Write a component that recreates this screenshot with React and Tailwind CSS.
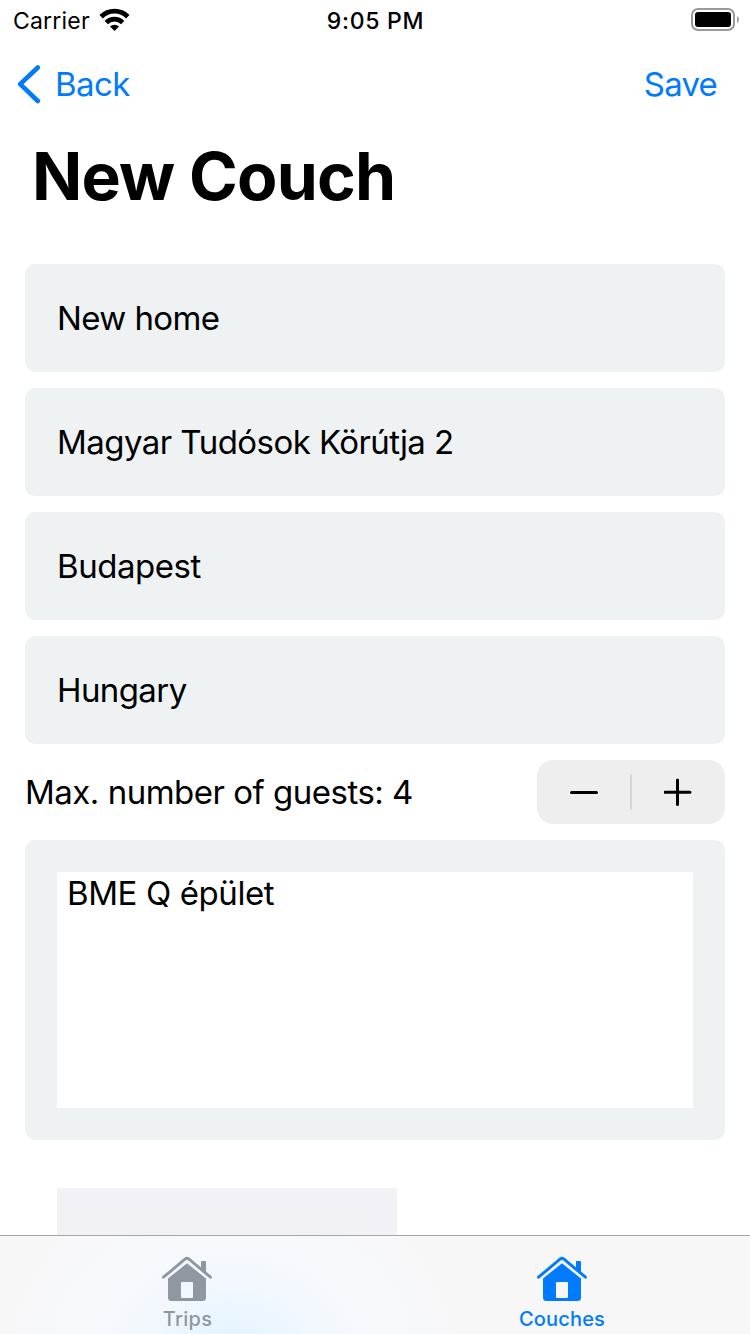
const fields = [
  { value: 'New home', tracking: 'tracking-[-0.6px]' },
  { value: 'Magyar Tudósok Körútja 2', tracking: 'tracking-[-0.55px]' },
  { value: 'Budapest', tracking: 'tracking-[-0.45px]' },
  { value: 'Hungary', tracking: 'tracking-[-0.6px]' },
];

function WifiIcon() {
  return (
    <svg className="mb-[2px] ml-[9px] h-[23px] w-[31px]" viewBox="0 0 31 23" fill="none">
      <path d="M2.2 8.8A18.6 18.6 0 0 1 28.8 8.8" stroke="#000" strokeWidth="4.8" />
      <path d="M7.3 14.6A11.4 11.4 0 0 1 23.7 14.6" stroke="#000" strokeWidth="4.6" />
      <path d="M11 18.6A6.6 6.6 0 0 1 20 18.6L15.5 23Z" fill="#000" />
    </svg>
  );
}

function BatteryIcon() {
  return (
    <svg className="h-[24px] w-[50px]" viewBox="0 0 50 24" fill="none">
      <rect x="2" y="1" width="42" height="21" rx="6" stroke="#999" strokeWidth="2" />
      <rect x="5" y="4" width="36" height="15" rx="3" fill="#000" />
      <path d="M47 8Q49 9 49 11.5T47 15Z" fill="#999" />
    </svg>
  );
}

function HouseIcon() {
  return (
    <svg className="h-[46px] w-[50px]" viewBox="0 0 50 46" fill="none">
      <path
        d="M1.5 21.2L23.3 3Q25 1.7 26.7 3L48.5 21.2"
        stroke="currentColor"
        strokeWidth="2.9"
        strokeLinecap="round"
      />
      <path d="M39 13V6Q39 5 40 5H43Q44 5 44 6V17.3Z" fill="currentColor" />
      <path
        fillRule="evenodd"
        d="M25 7.2L44 22.6V41.5Q44 45 40.5 45H9.5Q6 45 6 41.5V22.6ZM20 26Q19 26 19 27V41Q19 42 20 42H30Q31 42 31 41V27Q31 26 30 26Z"
        fill="currentColor"
      />
    </svg>
  );
}

function Field({ value, tracking }) {
  return (
    <div className="flex h-[108px] shrink-0 items-center rounded-[10px] bg-[#eef2f3] pl-8">
      <span className={tracking}>{value}</span>
    </div>
  );
}

export default function App() {
  return (
    <div className="flex h-[1334px] w-[750px] flex-col overflow-hidden bg-white font-['Inter',sans-serif] text-[33px] leading-[40px] text-black">
      <header className="shrink-0">
        <div className="grid h-10 grid-cols-3 items-center pr-3 pl-[13px] text-[23px] leading-[36px]">
          <div className="flex items-center">
            <span className="pt-[2px] tracking-[0.2px]">Carrier</span>
            <WifiIcon />
          </div>
          <span className="pt-[2px] text-center font-medium tracking-[0.7px]">9:05 PM</span>
          <div className="-mr-[2px] flex justify-end">
            <BatteryIcon />
          </div>
        </div>
        <nav className="flex h-[88px] items-center justify-between pr-[33px] pl-4 text-[#007aff]">
          <button className="flex items-center">
            <svg className="h-[40px] w-[26px]" viewBox="0 0 26 40" fill="none">
              <path d="M21.8 3.5L4.2 20.2L21.8 37" stroke="currentColor" strokeWidth="4.6" strokeLinecap="round" strokeLinejoin="round" />
            </svg>
            <span className="ml-[13px] tracking-[-0.6px]">Back</span>
          </button>
          <button className="tracking-[-0.8px]">Save</button>
        </nav>
        <h1 className="h-[104px] pt-2 pl-8 text-[66px] leading-[80px] font-bold tracking-[-0.85px]">New Couch</h1>
      </header>

      <main className="flex min-h-0 flex-1 flex-col gap-4 overflow-hidden px-[25px] pt-8">
        {fields.map((f) => (
          <Field key={f.value} {...f} />
        ))}
        <div className="flex h-16 shrink-0 items-center justify-between">
          <span className="tracking-[-0.5px]">Max. number of guests: 4</span>
          <div className="flex h-16 w-[188px] items-center rounded-[16px] bg-[#eeeeee]">
            <button className="flex w-[93px] justify-center">
              <svg className="h-7 w-7" viewBox="0 0 28 28">
                <path d="M1.5 14.5H26.5" stroke="#000" strokeWidth="3" strokeLinecap="round" />
              </svg>
            </button>
            <div className="h-9 w-[2px] rounded-full bg-[#d5d5d6]" />
            <button className="flex w-[93px] justify-center pr-px">
              <svg className="h-7 w-7" viewBox="0 0 28 28">
                <path d="M1 14.3H26M13.5 2V26.5" stroke="#000" strokeWidth="3" strokeLinecap="round" />
              </svg>
            </button>
          </div>
        </div>
        <div className="h-[300px] shrink-0 rounded-[10px] bg-[#eef2f3] p-8">
          <div className="h-full bg-white pt-px pl-[10px] tracking-[-0.4px]">BME Q épület</div>
        </div>
        <div className="mt-8 ml-8 h-[340px] w-[340px] shrink-0 bg-[#f2f1f6]" />
      </main>

      <footer className="grid h-[99px] shrink-0 grid-cols-2 border-t border-[#a7a7aa] bg-[#f7f7f7] bg-[radial-gradient(ellipse_200px_150px_at_232px_110px,#e3f3ff_0%,#f2f8fe_42%,#f8f9fd_75%,#f7f7f700_120%)] text-[20px] leading-6 font-medium">
        <div className="flex flex-col items-center pt-5 pr-[2px] text-[#9097a0]">
          <HouseIcon />
          <span className="mt-[5px] ml-[2px] tracking-[0.3px]">Trips</span>
        </div>
        <div className="flex flex-col items-center pt-5 pr-[2px] text-[#007aff]">
          <HouseIcon />
          <span className="mt-[5px] ml-px tracking-[0.15px]">Couches</span>
        </div>
      </footer>
    </div>
  );
}
